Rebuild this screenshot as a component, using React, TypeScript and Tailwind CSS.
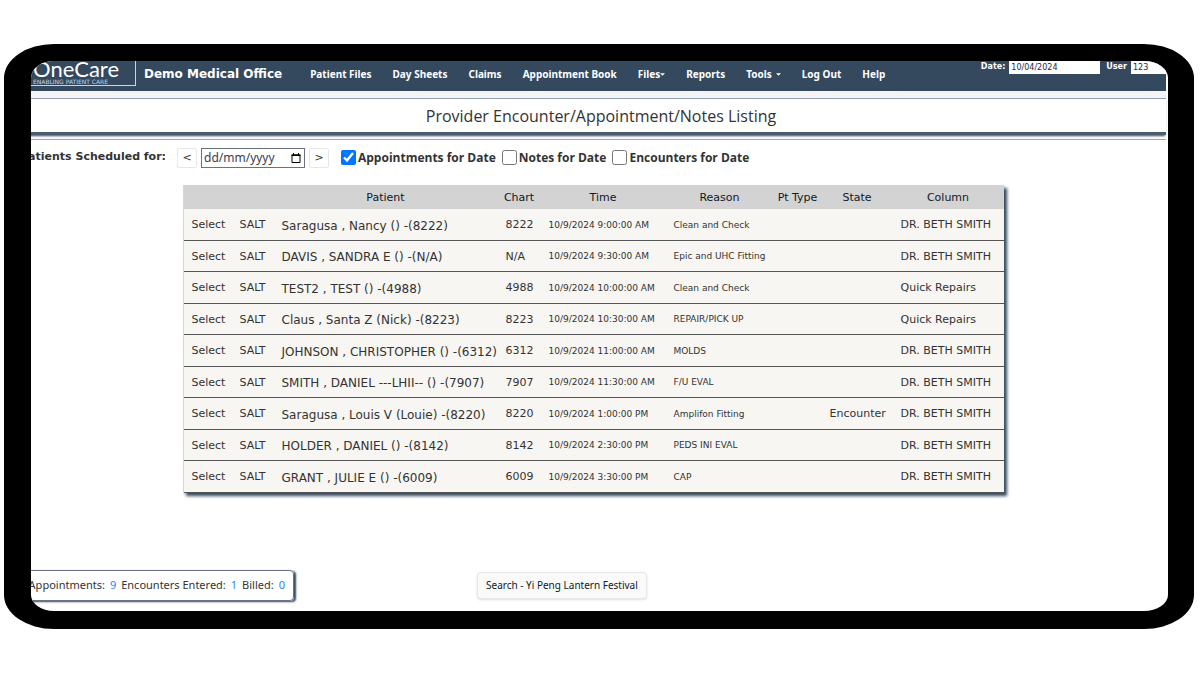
import React, { useState } from 'react';

interface Appointment {
  patient: string;
  chart: string;
  time: string;
  reason: string;
  state?: string;
  column: string;
}

const appointments: Appointment[] = [
  { patient: 'Saragusa , Nancy () -(8222)', chart: '8222', time: '10/9/2024 9:00:00 AM', reason: 'Clean and Check', column: 'DR. BETH SMITH' },
  { patient: 'DAVIS , SANDRA E () -(N/A)', chart: 'N/A', time: '10/9/2024 9:30:00 AM', reason: 'Epic and UHC Fitting', column: 'DR. BETH SMITH' },
  { patient: 'TEST2 , TEST () -(4988)', chart: '4988', time: '10/9/2024 10:00:00 AM', reason: 'Clean and Check', column: 'Quick Repairs' },
  { patient: 'Claus , Santa Z (Nick) -(8223)', chart: '8223', time: '10/9/2024 10:30:00 AM', reason: 'REPAIR/PICK UP', column: 'Quick Repairs' },
  { patient: 'JOHNSON , CHRISTOPHER () -(6312)', chart: '6312', time: '10/9/2024 11:00:00 AM', reason: 'MOLDS', column: 'DR. BETH SMITH' },
  { patient: 'SMITH , DANIEL ---LHII-- () -(7907)', chart: '7907', time: '10/9/2024 11:30:00 AM', reason: 'F/U EVAL', column: 'DR. BETH SMITH' },
  { patient: 'Saragusa , Louis V (Louie) -(8220)', chart: '8220', time: '10/9/2024 1:00:00 PM', reason: 'Amplifon Fitting', state: 'Encounter', column: 'DR. BETH SMITH' },
  { patient: 'HOLDER , DANIEL () -(8142)', chart: '8142', time: '10/9/2024 2:30:00 PM', reason: 'PEDS INI EVAL', column: 'DR. BETH SMITH' },
  { patient: 'GRANT , JULIE E () -(6009)', chart: '6009', time: '10/9/2024 3:30:00 PM', reason: 'CAP', column: 'DR. BETH SMITH' },
];

const navItems = ['Patient Files', 'Day Sheets', 'Claims', 'Appointment Book', 'Files', 'Reports', 'Tools', 'Log Out', 'Help'];

const columns = [
  { title: '', width: 'w-[48px]' },
  { title: '', width: 'w-[42px]' },
  { title: 'Patient', width: 'w-[224px]' },
  { title: 'Chart', width: 'w-[43px]' },
  { title: 'Time', width: 'w-[125px]' },
  { title: 'Reason', width: 'w-[108px]' },
  { title: 'Pt Type', width: 'w-[48px]' },
  { title: 'State', width: 'w-[71px]' },
  { title: 'Column', width: 'w-[111px]' },
];

function Caret() {
  return (
    <svg viewBox="0 0 6 3" className="w-[5px] h-[3px]" fill="currentColor" aria-hidden="true">
      <path d="M0 0h6L3 3z" />
    </svg>
  );
}

function Header() {
  return (
    <header className="h-[30px] bg-[#34495e] text-white flex items-start">
      <div className="w-[116px] h-[25px] shrink-0 pl-[13px] border-r border-b border-slate-300">
        <div className="font-[Lato,sans-serif] text-[22px] leading-[16px] whitespace-nowrap">OneCare</div>
        <div className="mt-[2px] text-[6px] leading-[6px] whitespace-nowrap text-slate-300">ENABLING PATIENT CARE</div>
      </div>
      <div className="ml-2 h-[26px] flex items-center text-[12px] font-bold whitespace-nowrap">Demo Medical Office</div>
      <nav className="ml-7 h-[26px] flex items-center gap-[21px] font-['Noto_Sans',sans-serif] text-[10px] font-bold whitespace-nowrap">
        {navItems.map((item) => (
          <a key={item} href="#" className={`flex items-center ${item === 'Tools' ? 'gap-1' : ''}`}>
            {item}
            {(item === 'Files' || item === 'Tools') && <Caret />}
          </a>
        ))}
      </nav>
      <div className="ml-auto flex items-start text-[8px] leading-[12px] font-bold">
        <label htmlFor="work-date">Date:</label>
        <input id="work-date" defaultValue="10/04/2024" className="ml-1 w-[91px] h-[13px] pl-[2px] bg-white text-gray-800 font-normal" />
        <label htmlFor="user" className="ml-[6px]">User</label>
        <input id="user" defaultValue="123" className="ml-1 w-[35px] h-[13px] pl-[2px] bg-white text-gray-800 font-normal" />
      </div>
    </header>
  );
}

function Filters() {
  const [date, setDate] = useState('');
  const [filters, setFilters] = useState([
    { label: 'Appointments for Date', checked: true },
    { label: 'Notes for Date', checked: false },
    { label: 'Encounters for Date', checked: false },
  ]);

  const toggle = (idx: number) => {
    setFilters(filters.map((f, i) => (i === idx ? { ...f, checked: !f.checked } : f)));
  };

  const stepStyle = 'w-5 h-5 border border-gray-200 rounded-xs bg-white text-[11px] leading-none font-normal';

  return (
    <div className="flex items-center h-[36px] border-t border-[#a5a5a0] text-[11px] font-bold whitespace-nowrap">
      <label htmlFor="schedule-date" className="w-[146px] flex justify-end">Patients Scheduled for:</label>
      <button className={`ml-[11px] ${stepStyle}`} aria-label="Previous day">&lt;</button>
      <div className="ml-1 w-[104px] h-5 px-[2px] border border-gray-500 flex items-center">
        <input
          id="schedule-date"
          value={date}
          onChange={(e) => setDate(e.target.value)}
          placeholder="dd/mm/yyyy"
          className="min-w-0 flex-1 font-['Noto_Sans',sans-serif] text-[12px] leading-[18px] font-normal placeholder:text-gray-700 outline-none"
        />
        <svg viewBox="0 0 10 10" className="w-[10px] h-[10px] mr-[1px] text-black" fill="none" stroke="currentColor" aria-hidden="true">
          <path d="M1 2h8v7.5H1z" />
          <path d="M.5 2.2h9" strokeWidth="1.6" />
          <path d="M2.5 0v2M7.5 0v2" />
        </svg>
      </div>
      <button className={`ml-1 ${stepStyle}`} aria-label="Next day">&gt;</button>
      <div className="ml-3 flex items-center gap-[6px] font-['Open_Sans',sans-serif] text-[12px]">
        {filters.map((f, i) => (
          <label key={f.label} className="flex items-center gap-[2px]">
            <input type="checkbox" checked={f.checked} onChange={() => toggle(i)} className="w-[15px] h-[15px] accent-[#0075ff]" />
            {f.label}
          </label>
        ))}
      </div>
    </div>
  );
}

function AppointmentTable() {
  return (
    <table className="mx-auto mt-[10px] table-fixed w-[821px] border-separate border-spacing-0 border-l border-gray-300 bg-[#f7f6f2] text-[11px] whitespace-nowrap shadow-[3px_3px_3px_#34495e]">
      <thead>
        <tr className="h-6 bg-[#d3d3d3] text-gray-900">
          {columns.map((c, i) => (
            <th key={i} className={`${c.width} p-0 pt-[2px] font-normal`}>{c.title}</th>
          ))}
        </tr>
      </thead>
      <tbody>
        {appointments.map((a) => (
          <tr key={a.patient} className="odd:h-8 even:h-[31px] [&>td]:border-b [&>td]:border-[#555] [&>td]:pl-2 [&>td]:pr-0 [&>td]:pt-[2px] [&>td]:pb-0">
            <td><button>Select</button></td>
            <td><button>SALT</button></td>
            <td className="text-[12px]">{a.patient}</td>
            <td>{a.chart}</td>
            <td className="text-[9px]">{a.time}</td>
            <td className="text-[9px]">{a.reason}</td>
            <td></td>
            <td>{a.state}</td>
            <td>{a.column}</td>
          </tr>
        ))}
      </tbody>
    </table>
  );
}

export default function App() {
  return (
    <div className="min-h-screen bg-white flex flex-col font-['DejaVu_Sans',sans-serif] text-[#333]">
      {/* Tablet bezel */}
      <div className="flex-1 flex flex-col mt-11 mb-[46px] ml-1 mr-[6px] bg-white border-black border-t-[17px] border-b-[18px] border-l-[27px] border-r-[26px] rounded-[50px/34px] overflow-hidden">
        <div className="flex-1 flex flex-col -ml-[11px] mr-[2px]">
          <Header />
          <div className="h-[7px] bg-[#f4f4f4]" />
          <h1 className="mb-[4px] h-[37px] pl-4 flex items-center justify-center border-t border-t-slate-400 border-b-[3px] border-b-[#4a5c70] bg-white font-['Open_Sans',sans-serif] text-[16px] shadow-[0_2px_2px_-1px_#34495e]">
            Provider Encounter/Appointment/Notes Listing
          </h1>
          <Filters />
          <AppointmentTable />
          <footer className="mt-auto mb-[10px] flex items-center font-['Noto_Sans',sans-serif]">
            <div className="w-[274px] h-[31px] pr-2 flex items-center justify-end gap-[5px] border border-gray-500 rounded-sm text-[11px] whitespace-nowrap shadow-[2px_1px_2px_#34495e]">
              <span>Appointments:</span>
              <span className="text-blue-500">9</span>
              <span>Encounters Entered:</span>
              <span className="text-blue-500">1</span>
              <span>Billed:</span>
              <span className="text-blue-500">0</span>
            </div>
            <div className="ml-[183px] h-[27px] px-2 flex items-center border border-gray-200 rounded-sm bg-[#fafafa] text-[10px] text-gray-900 whitespace-nowrap shadow-sm">
              Search - Yi Peng Lantern Festival
            </div>
          </footer>
        </div>
      </div>
    </div>
  );
}
